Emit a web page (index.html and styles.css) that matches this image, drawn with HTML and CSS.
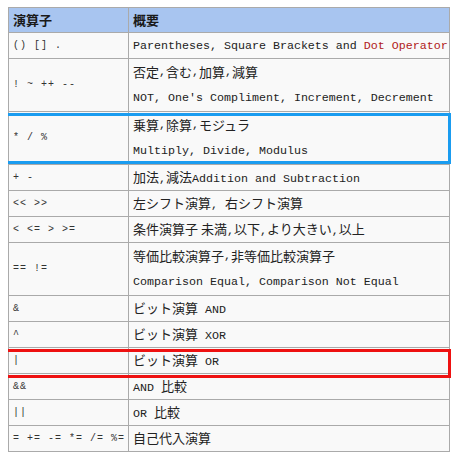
FILE: index.html
```html
<!DOCTYPE html>
<html lang="ja">
<head>
<meta charset="utf-8">
<title>演算子</title>
<link rel="stylesheet" href="styles.css">
</head>
<body>
<div class="wrap">
<table class="ops">
<colgroup><col class="c1"><col class="c2"></colgroup>
<thead>
<tr><th>演算子</th><th>概要</th></tr>
</thead>
<tbody>
<tr><td class="op">() [] .</td><td class="desc">Parentheses, Square Brackets and <span class="red">Dot Operator</span></td></tr>
<tr><td class="op">! ~ ++ --</td><td class="desc"><div class="line"><span class="ja">否定</span>,<span class="ja">含む</span>,<span class="ja">加算</span>,<span class="ja">減算</span></div><div class="line">NOT, One's Compliment, Increment, Decrement</div></td></tr>
<tr><td class="op">* / %</td><td class="desc"><div class="line"><span class="ja">乗算</span>,<span class="ja">除算</span>,<span class="ja">モジュラ</span></div><div class="line">Multiply, Divide, Modulus</div></td></tr>
<tr><td class="op">+ -</td><td class="desc"><span class="ja">加法</span>,<span class="ja">減法</span>Addition and Subtraction</td></tr>
<tr><td class="op">&lt;&lt; &gt;&gt;</td><td class="desc"><span class="ja">左シフト演算</span>, <span class="ja">右シフト演算</span></td></tr>
<tr><td class="op">&lt; &lt;= &gt; &gt;=</td><td class="desc"><span class="ja">条件演算子 未満</span>,<span class="ja">以下</span>,<span class="ja">より大きい</span>,<span class="ja">以上</span></td></tr>
<tr><td class="op">== !=</td><td class="desc"><div class="line"><span class="ja">等価比較演算子</span>,<span class="ja">非等価比較演算子</span></div><div class="line">Comparison Equal, Comparison Not Equal</div></td></tr>
<tr><td class="op">&amp;</td><td class="desc"><span class="ja">ビット演算</span> AND</td></tr>
<tr><td class="op">^</td><td class="desc"><span class="ja">ビット演算</span> XOR</td></tr>
<tr><td class="op">|</td><td class="desc"><span class="ja">ビット演算</span> OR</td></tr>
<tr><td class="op">&amp;&amp;</td><td class="desc">AND <span class="ja">比較</span></td></tr>
<tr><td class="op">||</td><td class="desc">OR <span class="ja">比較</span></td></tr>
<tr><td class="op">= += -= *= /= %=</td><td class="desc"><span class="ja">自己代入演算</span></td></tr>
</tbody>
</table>
<div class="mark mark-blue"></div>
<div class="mark mark-red"></div>
</div>
</body>
</html>
```

FILE: styles.css
```css
body {
  margin: 7px 8px;
  background: #ffffff;
}
.wrap {
  position: relative;
  width: 442px;
}
.ops {
  border-collapse: collapse;
  width: 442px;
  table-layout: fixed;
  background: #f9f9f9;
  border: 1px solid #aaaaaa;
  color: #222222;
}
.c1 { width: 120px; }
.ops th {
  background: #a8c5f0;
  text-align: left;
  font: bold 13px/18px "Noto Sans CJK JP", sans-serif;
  padding: 0 4px;
  height: 24px;
  border: 1px solid #aaaaaa;
  color: #1a1a1a;
}
.ops td {
  border: 1px solid #aaaaaa;
  padding: 0 4px;
  height: 25px;
  vertical-align: middle;
  white-space: nowrap;
}
.op {
  font: 10px/16px "Liberation Mono", monospace;
  letter-spacing: 1px;
  color: #333333;
}
.desc {
  font: 11.67px/16px "Liberation Mono", "Noto Sans CJK JP", monospace;
  color: #222222;
}
.line {
  height: 26px;
  display: flex;
  align-items: center;
}
.ja {
  font-family: "Noto Sans CJK JP", sans-serif;
  font-size: 13px;
}
.red {
  color: #b02020;
}
.mark {
  position: absolute;
  left: -3px;
  width: 440px;
  border: 3px solid;
  pointer-events: none;
}
.mark-blue {
  top: 106px;
  height: 45px;
  border-color: #1a9cf0;
}
.mark-red {
  top: 342px;
  height: 23px;
  border-color: #ee1111;
}
```
